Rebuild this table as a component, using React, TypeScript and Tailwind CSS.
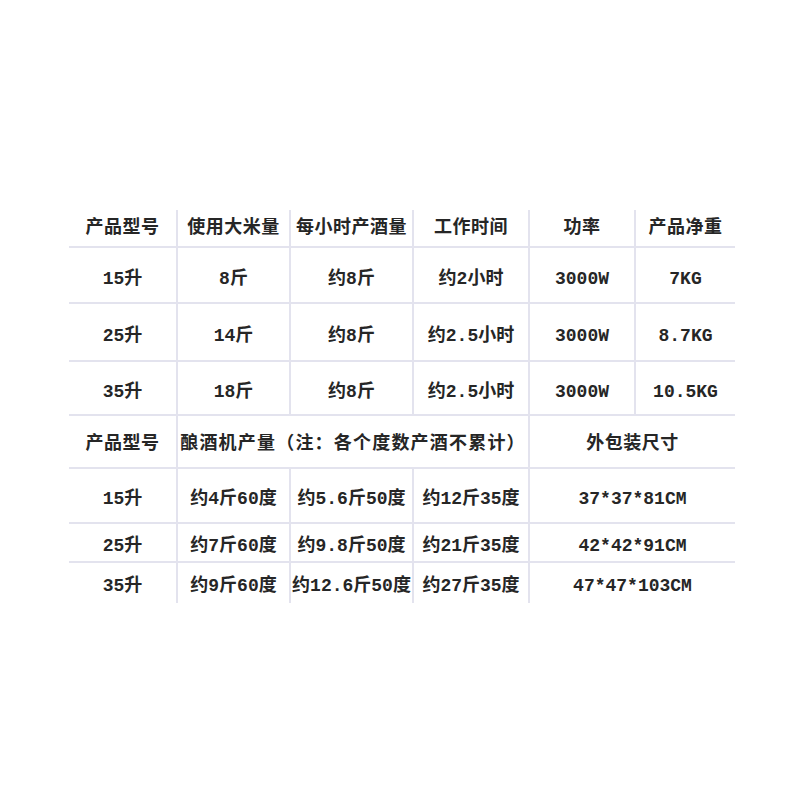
const line = 'border-[#e3e3ee]';

const topHead = ['产品型号', '使用大米量', '每小时产酒量', '工作时间', '功率', '产品净重'];
const topRows = [
    ['15升', '8斤', '约8斤', '约2小时', '3000W', '7KG'],
    ['25升', '14斤', '约8斤', '约2.5小时', '3000W', '8.7KG'],
    ['35升', '18斤', '约8斤', '约2.5小时', '3000W', '10.5KG'],
];
const topHeights = ['h-[56px]', 'h-[58px]', 'h-[54px]'];

const lowRows = [
    ['15升', '约4斤60度', '约5.6斤50度', '约12斤35度', '37*37*81CM'],
    ['25升', '约7斤60度', '约9.8斤50度', '约21斤35度', '42*42*91CM'],
    ['35升', '约9斤60度', '约12.6斤50度', '约27斤35度', '47*47*103CM'],
];
const lowHeights = ['h-[55px] border-b-2', 'h-[39px] border-b-2', 'h-[40px]'];

function Cell({ children, first, className = '' }: { children: React.ReactNode; first?: boolean; className?: string }) {
    return (
        <div
            className={`flex items-center justify-center whitespace-nowrap ${line} ${first ? '' : 'border-l-2'} ${className}`}
        >
            {children}
        </div>
    );
}

export default function App() {
    return (
        <div
            className="w-[800px] h-[800px] bg-white pt-[210px] pl-[69px] text-[18px] font-bold text-[#262626] leading-none"
            style={{ fontFamily: '"Liberation Mono", "Noto Sans CJK SC", monospace' }}
        >
            {/* 参数表 */}
            <div className="w-[666px] grid grid-cols-[107px_113px_123px_116px_106px_101px]">
                {topHead.map((t, i) => (
                    <Cell key={t + i} first={i === 0} className="h-[38px] border-b-2 tracking-[0.5px]">
                        {t}
                    </Cell>
                ))}
                {topRows.map((row, r) =>
                    row.map((t, i) => (
                        <Cell key={`${r}-${i}`} first={i === 0} className={`${topHeights[r]} border-b-2 pt-[7px]`}>
                            {t}
                        </Cell>
                    ))
                )}
            </div>

            {/* 产量与包装 */}
            <div className="w-[666px] grid grid-cols-[107px_113px_123px_116px_207px]">
                <Cell first className="h-[53px] border-b-2 pt-[4px] tracking-[0.5px]">产品型号</Cell>
                <Cell className="col-span-3 h-[53px] border-b-2 pt-[4px] tracking-[1.2px]">
                    酿酒机产量（注：各个度数产酒不累计）
                </Cell>
                <Cell className="h-[53px] border-b-2 pt-[4px] tracking-[0.5px]">外包装尺寸</Cell>
                {lowRows.map((row, r) =>
                    row.map((t, i) => (
                        <Cell key={`l${r}-${i}`} first={i === 0} className={`${lowHeights[r]} pt-[6px]`}>
                            {t}
                        </Cell>
                    ))
                )}
            </div>
        </div>
    );
}
